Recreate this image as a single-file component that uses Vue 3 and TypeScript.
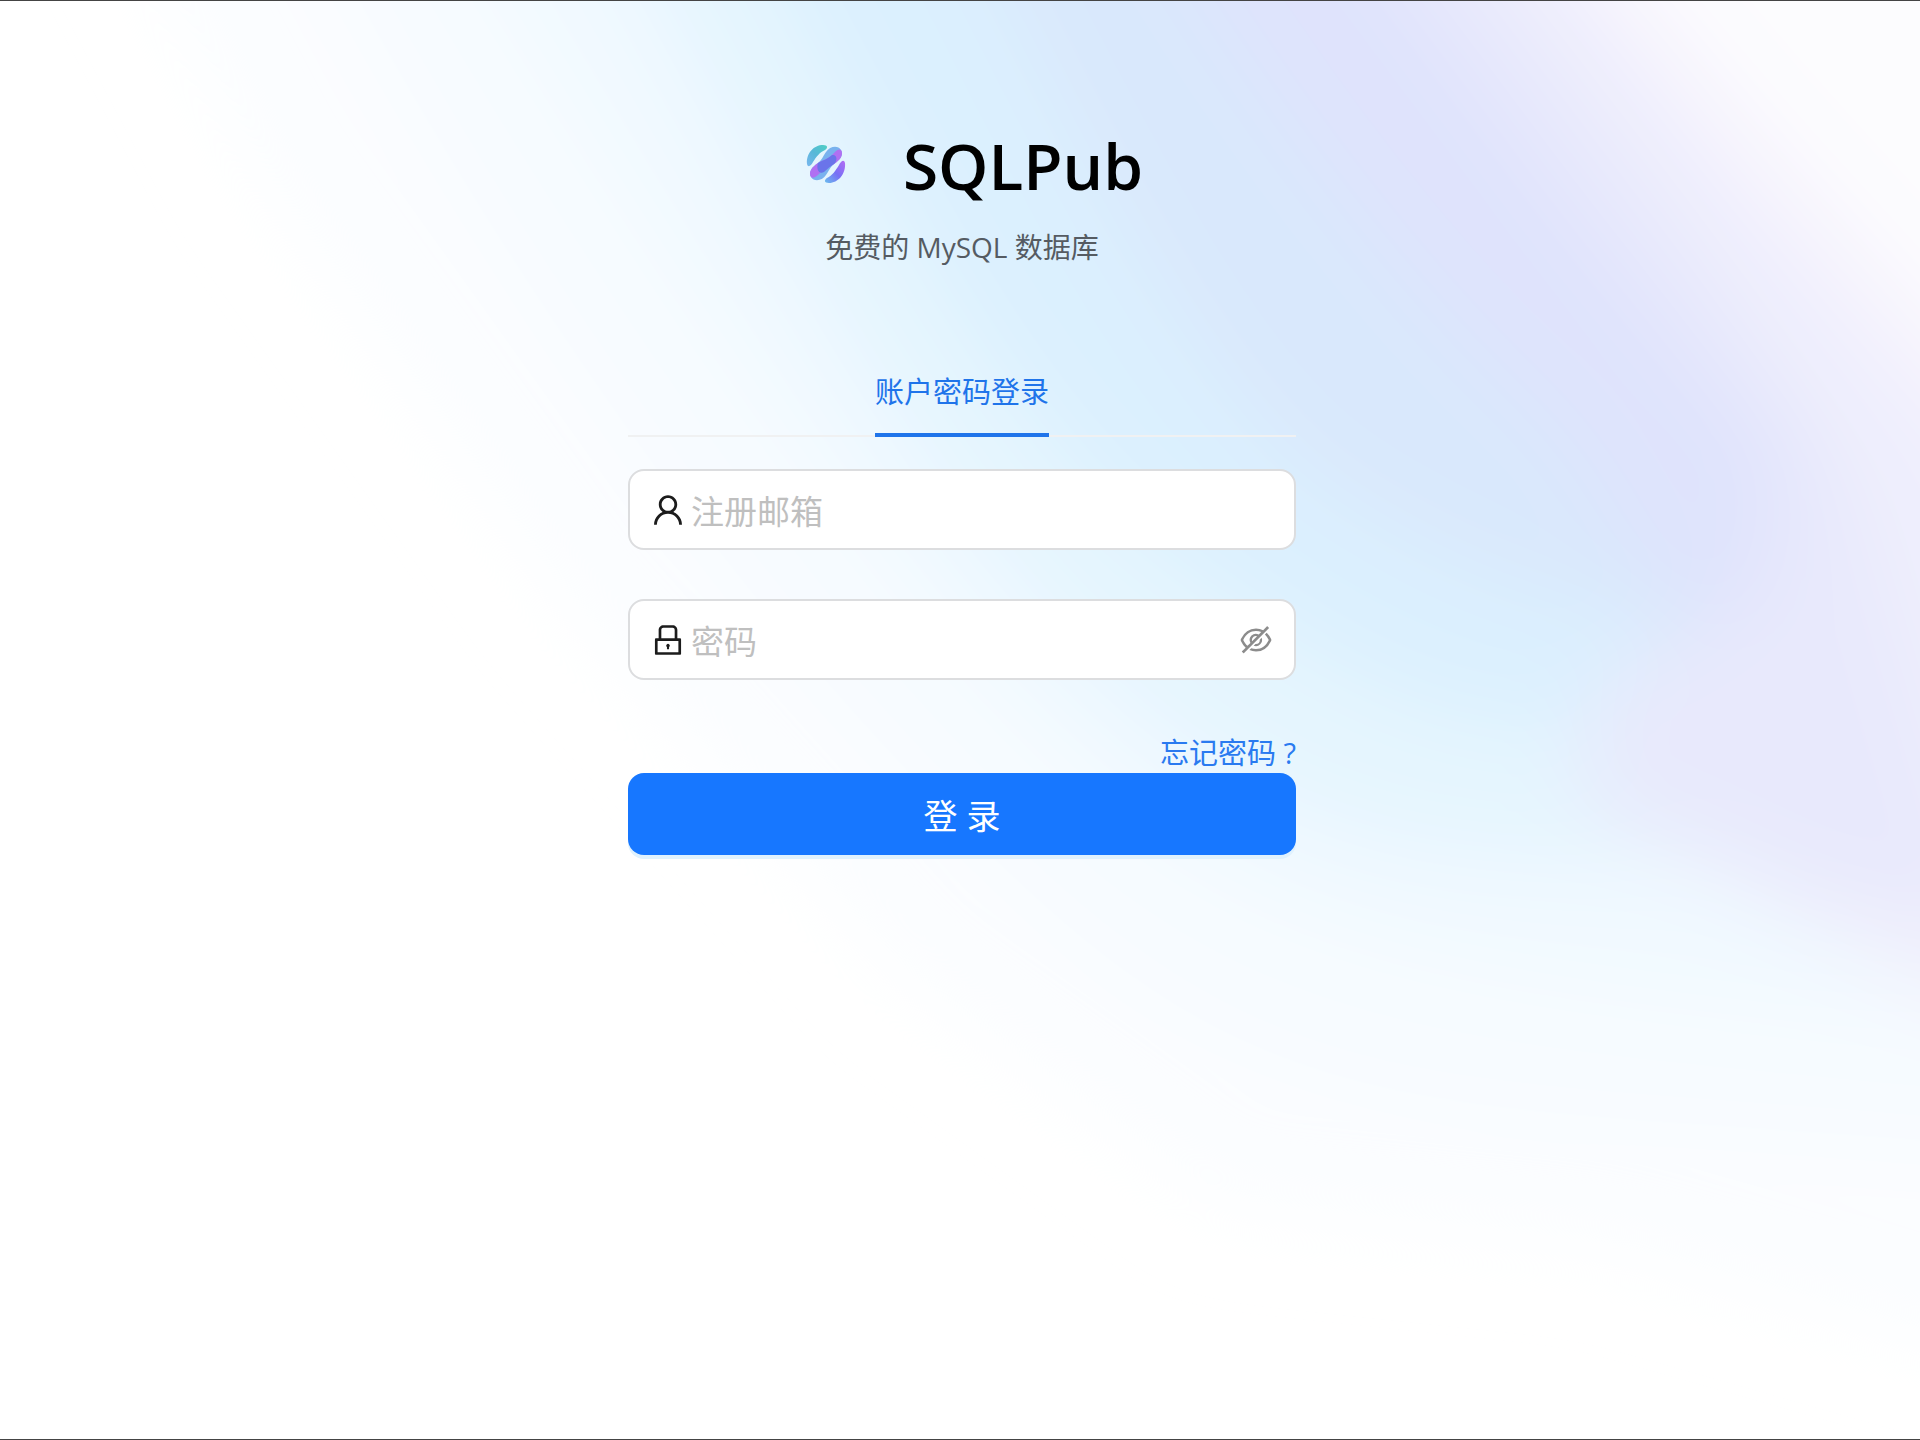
<script setup lang="ts">
import { ref } from 'vue'

const email = ref('')
const password = ref('')
const showPassword = ref(false)

const icons = {
  user: 'M858.5 763.6a374 374 0 00-80.6-119.5 375.63 375.63 0 00-119.5-80.6c-.4-.2-.8-.3-1.2-.5C719.5 518 760 444.7 760 362c0-137-111-248-248-248S264 225 264 362c0 82.7 40.5 156 102.8 201.1-.4.2-.8.3-1.2.5-44.8 18.9-85 46-119.5 80.6a375.63 375.63 0 00-80.6 119.5A371.7 371.7 0 00136 901.8a8 8 0 008 8.2h60c4.4 0 7.9-3.5 8-7.8 2-77.2 33-149.5 87.8-204.3 56.7-56.7 132-87.9 212.2-87.9s155.5 31.2 212.2 87.9C779 752.7 810 825 812 902.2c.1 4.4 3.6 7.8 8 7.8h60a8 8 0 008-8.2c-1-47.8-10.9-94.3-29.5-138.2zM512 534c-45.9 0-89.1-17.9-121.6-50.4S340 407.9 340 362c0-45.9 17.9-89.1 50.4-121.6S466.1 190 512 190s89.1 17.9 121.6 50.4S684 316.1 684 362c0 45.9-17.9 89.1-50.4 121.6S557.9 534 512 534z',
  lock: 'M832 464h-68V240c0-70.7-57.3-128-128-128H388c-70.7 0-128 57.3-128 128v224h-68c-17.7 0-32 14.3-32 32v384c0 17.7 14.3 32 32 32h640c17.7 0 32-14.3 32-32V496c0-17.7-14.3-32-32-32zM332 240c0-30.9 25.1-56 56-56h248c30.9 0 56 25.1 56 56v224H332V240zm460 600H232V536h560v304zM484 701v53c0 4.4 3.6 8 8 8h40c4.4 0 8-3.6 8-8v-53a48.01 48.01 0 10-56 0z',
  eyeOff: 'M942.2 486.2Q889.47 375.11 816.7 305l-50.88 50.88C807.31 395.53 843.45 447.4 874.7 512 791.5 684.2 673.4 766 512 766q-72.67 0-133.87-22.38L323 798.75Q408 838 512 838q288.3 0 430.2-300.3a60.29 60.29 0 000-51.5zm-63.57-320.64L836 122.88a8 8 0 00-11.32 0L715.31 232.2Q624.86 186 512 186q-288.3 0-430.2 300.3a60.3 60.3 0 000 51.5q56.69 119.4 136.5 191.41L112.48 835a8 8 0 000 11.31L155.17 889a8 8 0 0011.31 0l712.15-712.12a8 8 0 000-11.32zM149.3 512C232.6 339.8 350.7 258 512 258c54.54 0 104.13 9.36 149.12 28.39l-70.3 70.3a176 176 0 00-238.13 238.13l-83.42 83.42C223.1 637.49 183.3 582.28 149.3 512zm246.7 0a112.11 112.11 0 01146.2-106.69L401.31 546.2A112 112 0 01396 512z M508 624c-3.46 0-6.87-.16-10.25-.47l-52.82 52.82a176.09 176.09 0 00227.42-227.42l-52.82 52.82c.31 3.38.47 6.79.47 10.25a111.94 111.94 0 01-112 112z',
}
</script>

<template>
  <div class="page">
    <svg class="backdrop" viewBox="0 0 1920 1440" preserveAspectRatio="none" aria-hidden="true">
      <defs>
        <filter id="soft" filterUnits="userSpaceOnUse" x="-400" y="-400" width="2800" height="2300">
          <feGaussianBlur stdDeviation="42" />
        </filter>
      </defs>
      <g filter="url(#soft)">
        <path d="M60 -200L260 180L560 600L900 980L1220 1210L1600 1250L2200 1420V-200Z" fill="#fbfdff" />
        <path d="M240 -200C460 240 720 620 1020 900S1500 1100 2200 1180V-200Z" fill="#f7fbff" />
        <path d="M380 -200C620 200 840 560 1080 780S1560 980 2200 1060V-200Z" fill="#f1f9ff" />
        <path d="M540 -200C740 140 860 440 1080 660S1480 870 1760 860L2000 300V-200Z" fill="#e5f5fe" />
        <path d="M680 -200C840 60 960 400 1180 560S1480 740 1700 720V-200Z" fill="#dbf0fe" />
        <path d="M1600 700C1700 860 1800 960 2200 1100V500Z" fill="#f3f1fc" />
        <path d="M900 -200C1040 60 1180 400 1340 500S1560 600 1700 640L2000 300V-200Z" fill="#d9e8fc" />
        <path d="M1090 -200C1230 60 1400 280 1530 400S1600 620 1820 660L2200 300V-200Z" fill="#dfe3fc" />
        <path d="M1270 -200L1580 215L1780 460L1760 600L1600 680L1580 800L1780 900L2200 980V-200Z" fill="#e8e9fc" />
        <path d="M1370 -200L1680 210L1860 480L2000 960H2200V-200Z" fill="#efeffd" />
        <path d="M1430 -200L1740 190L1960 430L2200 700V-200Z" fill="#f6f3fd" />
        <path d="M1480 -200L1770 140L1980 370L2200 600V-200Z" fill="#fcfcfe" />
      </g>
    </svg>

    <main class="login">
      <header class="brand">
        <div class="brand-row">
          <svg class="logo" viewBox="0 0 90 90" aria-hidden="true">
            <defs>
              <linearGradient id="teal" x1="1" y1="0" x2="0" y2="1">
                <stop offset="0" stop-color="#4fcfc4" />
                <stop offset=".5" stop-color="#58b8d8" />
                <stop offset="1" stop-color="#78b6ee" />
              </linearGradient>
              <linearGradient id="violet" x1="1" y1="0" x2="0" y2="1">
                <stop offset="0" stop-color="#b56cf4" />
                <stop offset=".5" stop-color="#7770f5" />
                <stop offset="1" stop-color="#6bbdee" />
              </linearGradient>
            </defs>
            <path d="M26 45C25 34 33 26 42 26C47 26 47 29 44 31C39 33 35 38 32 43C30 47 27 49 26 45Z" fill="url(#teal)" />
            <path d="M64 44C65 55 57 64 48 64C43 64 43 61 46 59C51 57 55 51 58 46C60 42 63 40 64 44Z" fill="url(#violet)" />
            <path d="M45 33C49 27 57 26 60 31C63 36 59 41 53 45C49 48 48 52 45 56C41 62 33 63 30 58C27 53 31 48 37 44C41 41 42 37 45 33Z" fill="#79b2ee" />
            <path d="M60 31C63 36 59 41 53 45C48 48 44 50 40 53C36 57 33 60 30 58C27 53 31 48 37 44C42 41 47 40 51 36C54 33 57 29 60 31Z" fill="#b070f2" />
            <path d="M51 36C56 35 57 41 53 45C49 48 46 50 43 53C38 56 35 50 37 44C42 41 47 40 51 36Z" fill="#6a74ea" />
          </svg>
          <h1>SQLPub</h1>
        </div>
        <p class="subtitle">免费的 MySQL 数据库</p>
      </header>

      <div class="tabs" role="tablist">
        <button class="tab" type="button" role="tab" aria-selected="true">账户密码登录</button>
      </div>

      <form @submit.prevent>
        <label class="field">
          <svg class="icon" viewBox="0 0 1024 1024" aria-hidden="true"><path :d="icons.user" /></svg>
          <input v-model="email" type="text" placeholder="注册邮箱" aria-label="注册邮箱" />
        </label>
        <div class="field">
          <svg class="icon" viewBox="0 0 1024 1024" aria-hidden="true"><path :d="icons.lock" /></svg>
          <input v-model="password" :type="showPassword ? 'text' : 'password'" placeholder="密码" aria-label="密码" />
          <button class="eye" type="button" aria-label="显示密码" @click="showPassword = !showPassword">
            <svg viewBox="0 0 1024 1024" aria-hidden="true"><path :d="icons.eyeOff" /></svg>
          </button>
        </div>
        <div class="forgot"><a href="#">忘记密码 ?</a></div>
        <button class="submit" type="submit">登 录</button>
      </form>
    </main>
  </div>
</template>

<style>
body {
  background: #fff;
}
</style>

<style scoped>
.page {
  position: relative;
  box-sizing: border-box;
  min-height: 100vh;
  padding: 118px 0 0 4px;
  border-top: 1px solid #444;
  border-bottom: 1px solid #444;
  overflow: hidden;
  font-family: "Open Sans", "Noto Sans CJK SC", sans-serif;
}

.backdrop {
  position: absolute;
  inset: 0;
  width: 100%;
  height: 100%;
}

.login {
  position: relative;
  width: 100%;
  max-width: 668px;
  margin: 0 auto;
}

.brand-row {
  display: flex;
  align-items: flex-start;
  justify-content: center;
  gap: 32px;
  height: 90px;
}

.logo {
  width: 90px;
  height: 90px;
}

h1 {
  margin: 0;
  color: #000;
  font-size: 64px;
  font-weight: 600;
  line-height: 94px;
}

.subtitle {
  margin: 16px 0 0;
  color: #555b62;
  font-size: 28px;
  line-height: 44px;
  text-align: center;
}

.tabs {
  display: flex;
  justify-content: center;
  margin-top: 100px;
  box-shadow: inset 0 -2px #f0f1f2;
}

.tab {
  height: 68px;
  padding: 0 0 18px;
  border: 0;
  border-bottom: 4px solid #1f74ea;
  background: none;
  color: #1f74ea;
  font: inherit;
  font-size: 29px;
  line-height: 46px;
}

form {
  padding-top: 32px;
}

.field {
  display: flex;
  align-items: center;
  box-sizing: border-box;
  height: 81px;
  margin-bottom: 49px;
  padding: 0 20px 0 19px;
  border: 2px solid #dcdddf;
  border-radius: 16px;
  background: #fff;
}

.icon {
  flex: none;
  width: 38px;
  height: 38px;
  margin-right: 4px;
  fill: #1c1c1c;
}

.field input {
  flex: 1;
  min-width: 0;
  height: 50px;
  padding: 3px 0 0;
  border: 0;
  outline: 0;
  background: none;
  color: #1c1c1c;
  font: inherit;
  font-size: 33px;
}

.field input::placeholder {
  color: #bfbfbf;
}

.eye {
  flex: none;
  width: 36px;
  height: 36px;
  padding: 0;
  border: 0;
  background: none;
}

.eye svg {
  display: block;
  fill: #8c8c8c;
}

.forgot {
  display: flex;
  justify-content: flex-end;
  height: 44px;
  font-size: 29px;
  line-height: 48px;
}

.forgot a {
  color: #2a7af0;
  text-decoration: none;
}

.submit {
  display: block;
  width: 100%;
  height: 82px;
  padding: 0;
  border: 0;
  border-radius: 16px;
  background: #1777ff;
  box-shadow: 0 4px 0 #e0f2fe;
  color: #fff;
  font: inherit;
  font-size: 34px;
}
</style>
